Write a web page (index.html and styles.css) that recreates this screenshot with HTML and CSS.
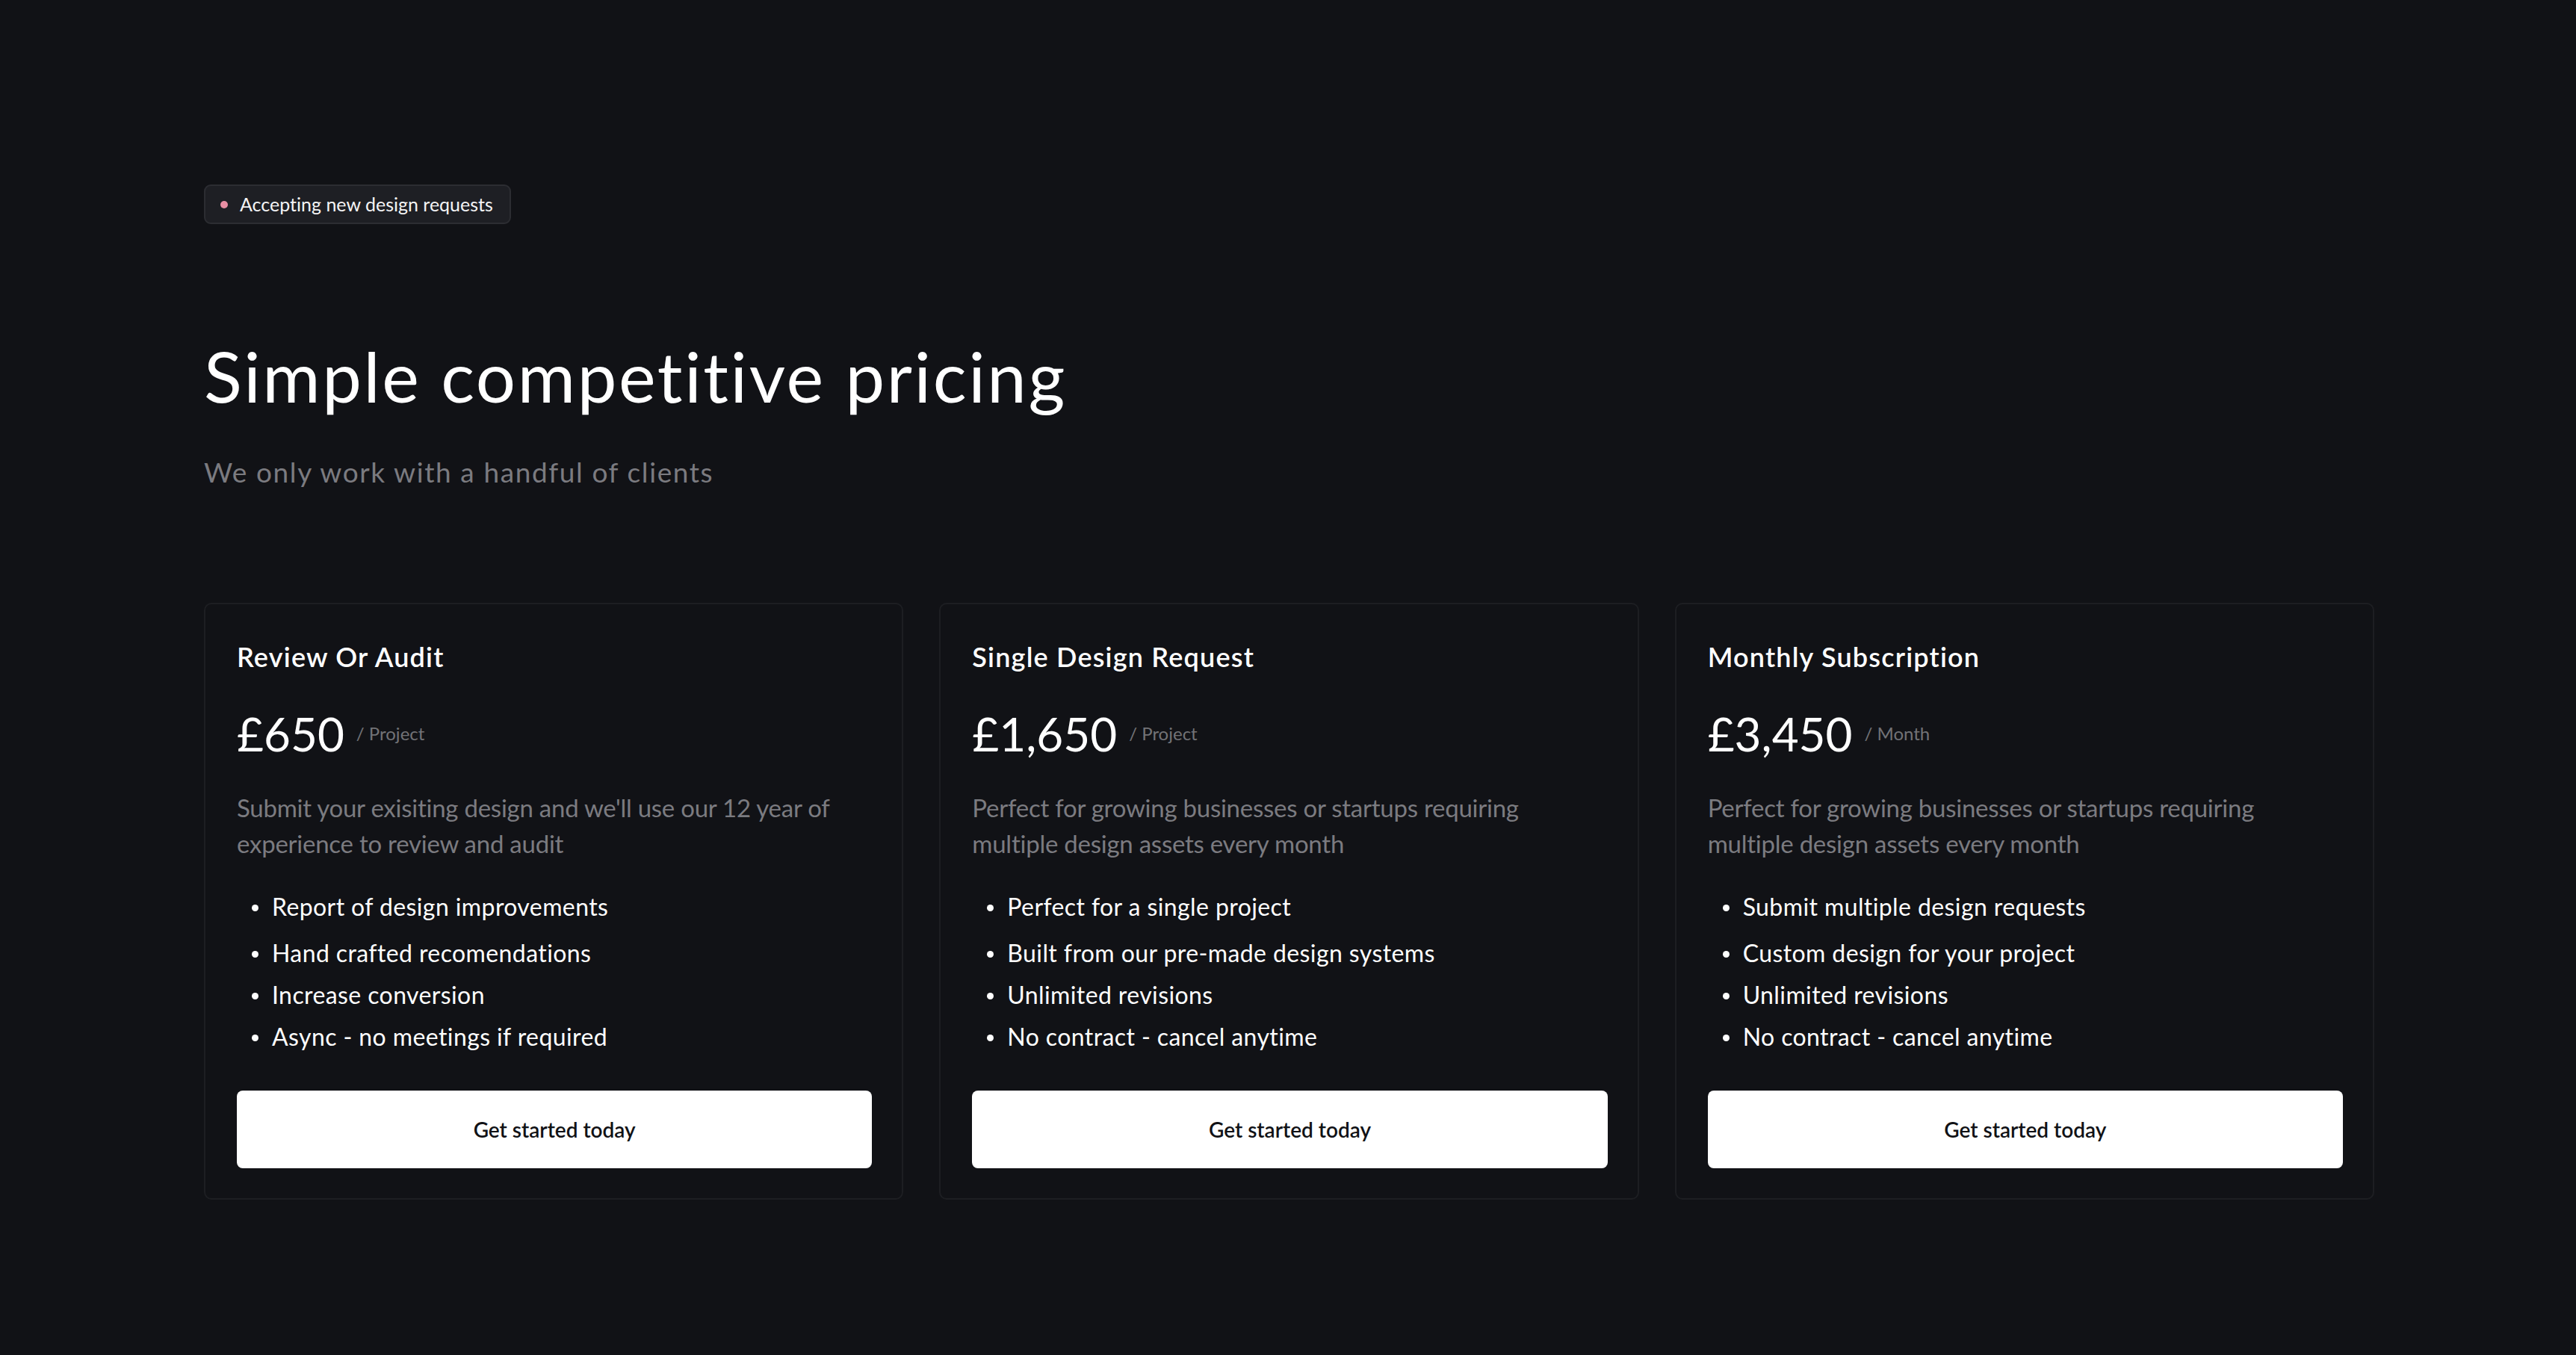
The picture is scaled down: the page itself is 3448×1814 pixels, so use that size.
FILE: index.html
```html
<!DOCTYPE html>
<html lang="en">
<head>
<meta charset="utf-8">
<title>Simple competitive pricing</title>
<link rel="stylesheet" href="styles.css">
</head>
<body>
<main class="page">
  <div class="badge"><span class="badge-dot"></span><span class="badge-text">Accepting new design requests</span></div>
  <h1 class="title">Simple competitive pricing</h1>
  <p class="subtitle">We only work with a handful of clients</p>
  <section class="plans">
    <article class="card">
      <h2 class="card-title">Review Or Audit</h2>
      <div class="price-row"><span class="price">£650</span><span class="unit">/ Project</span></div>
      <p class="desc">Submit your exisiting design and we'll use our 12 year of experience to review and audit</p>
      <ul class="features">
        <li>Report of design improvements</li>
        <li>Hand crafted recomendations</li>
        <li>Increase conversion</li>
        <li>Async - no meetings if required</li>
      </ul>
      <button class="cta">Get started today</button>
    </article>
    <article class="card">
      <h2 class="card-title">Single Design Request</h2>
      <div class="price-row"><span class="price">£1,650</span><span class="unit">/ Project</span></div>
      <p class="desc">Perfect for growing businesses or startups requiring multiple design assets every month</p>
      <ul class="features">
        <li>Perfect for a single project</li>
        <li>Built from our pre-made design systems</li>
        <li>Unlimited revisions</li>
        <li>No contract - cancel anytime</li>
      </ul>
      <button class="cta">Get started today</button>
    </article>
    <article class="card">
      <h2 class="card-title">Monthly Subscription</h2>
      <div class="price-row"><span class="price">£3,450</span><span class="unit">/ Month</span></div>
      <p class="desc">Perfect for growing businesses or startups requiring multiple design assets every month</p>
      <ul class="features">
        <li>Submit multiple design requests</li>
        <li>Custom design for your project</li>
        <li>Unlimited revisions</li>
        <li>No contract - cancel anytime</li>
      </ul>
      <button class="cta">Get started today</button>
    </article>
  </section>
</main>
</body>
</html>
```

FILE: styles.css
```css
html, body {
  margin: 0;
  padding: 0;
  background: #111216;
}

body {
  font-family: "Lato", "Noto Sans", sans-serif;
  font-variant-ligatures: none;
  color: #ffffff;
  min-height: 1814px;
}

.page {
  box-sizing: border-box;
  width: 3448px;
  padding: 247px 270px 0 273px;
  display: flex;
  flex-direction: column;
  align-items: flex-start;
}

.badge {
  box-sizing: border-box;
  height: 53px;
  display: inline-flex;
  align-items: center;
  gap: 16px;
  padding: 0 22px 0 20px;
  background: #1e1f24;
  border: 2px solid #2c2d32;
  border-radius: 9px;
}

.badge-dot {
  width: 10px;
  height: 10px;
  border-radius: 50%;
  background: #e88ea3;
}

.badge-text {
  font-size: 25px;
  line-height: 1;
  color: #f4f4f5;
}

.title {
  margin: 147px 0 0;
  font-size: 94px;
  line-height: 1.2;
  font-weight: 400;
  letter-spacing: 2.6px;
  color: #ffffff;
}

.subtitle {
  margin: 50px 0 0;
  font-size: 37px;
  line-height: 1.2;
  font-weight: 400;
  letter-spacing: 1.6px;
  color: #7b7b80;
}

.plans {
  margin-top: 153px;
  width: 2905px;
  display: grid;
  grid-template-columns: repeat(3, 1fr);
  gap: 48px;
}

.card {
  box-sizing: border-box;
  display: flex;
  flex-direction: column;
  padding: 49px 40px 40px 42px;
  border: 2px solid #1d1e22;
  border-radius: 10px;
  background: #111216;
}

.card-title {
  margin: 0;
  font-size: 36px;
  line-height: 1.2;
  font-weight: 600;
  letter-spacing: 1.2px;
  color: #ffffff;
}

.price-row {
  margin-top: 44px;
  display: flex;
  align-items: center;
  gap: 16px;
}

.price {
  font-size: 62px;
  line-height: 1.2;
  font-weight: 400;
  color: #ffffff;
}

.unit {
  font-size: 24px;
  line-height: 1.2;
  color: #727276;
}

.desc {
  margin: 37px 0 0;
  font-size: 33px;
  line-height: 48px;
  letter-spacing: -0.25px;
  color: #7b7b80;
}

.features {
  margin: 33px 0 0;
  padding: 0;
  list-style: none;
}

.features li {
  display: flex;
  align-items: center;
  gap: 18px;
  font-size: 32px;
  line-height: 56px;
  letter-spacing: 0.4px;
  color: #ffffff;
}

.features li:first-child {
  margin-bottom: 6px;
}

.features li::before {
  content: "";
  flex: none;
  width: 9px;
  height: 9px;
  margin-left: 20px;
  margin-top: 4px;
  border-radius: 50%;
  background: #ffffff;
}

.cta {
  margin-top: 44px;
  height: 104px;
  width: 100%;
  border: none;
  border-radius: 8px;
  background: #ffffff;
  color: #111216;
  font-family: "Lato", "Noto Sans", sans-serif;
  font-variant-ligatures: none;
  font-size: 28px;
  font-weight: 600;
  cursor: pointer;
}
```
